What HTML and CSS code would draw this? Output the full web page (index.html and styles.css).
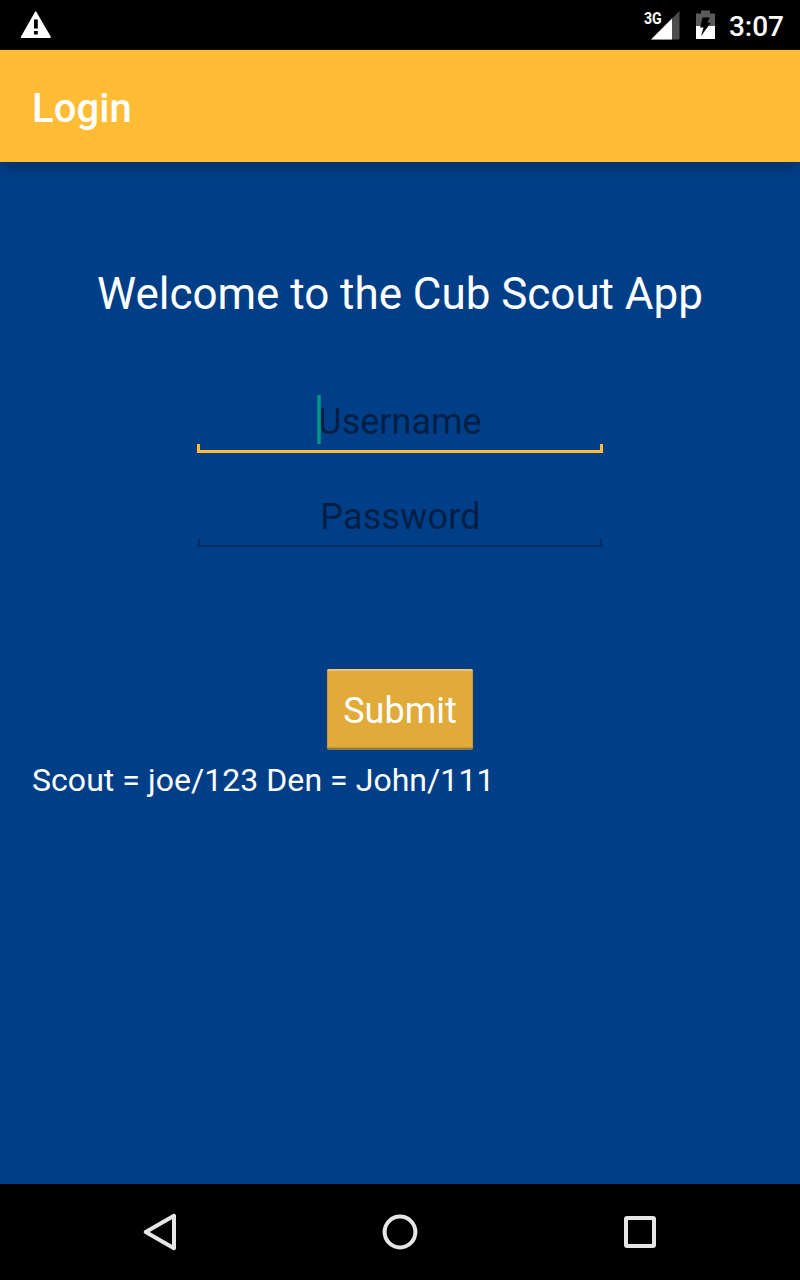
FILE: index.html
```
<!DOCTYPE html>
<html lang="en">
<head>
<meta charset="utf-8">
<title>Login</title>
<link rel="stylesheet" href="styles.css">
</head>
<body>
<div class="screen">
  <div class="status">
    <svg class="warning" width="32" height="28" viewBox="20 10 32 28"><path d="M35.700 12 50.200 37.200H21.500Z" fill="#fff" stroke="#fff" stroke-width="1.400" stroke-linejoin="round"/><path d="M34 19.500h3.800v9H34zM34 31h3.800v3.600H34z" fill="#000"/></svg>
    <div class="status-right">
      <span class="network">3G</span>
      <svg class="signal" width="29" height="29" viewBox="0 0 29 29"><path d="M28.500 0V28.500H0Z" fill="#4d4d4d"/><path d="M21 7.500V28.500H0Z" fill="#fff"/></svg>
      <svg class="battery" width="19" height="29" viewBox="0 0 19 29"><path d="M5 .5h9v3h5V16H0V3.500h5z" fill="#5b5b5b"/><path d="M0 16h19v13H0z" fill="#fff"/><path d="M6.500 7.500H13.800L11.400 12.800H14.800L5 26 7.500 17.500H4.200Z" fill="#000"/></svg>
      <span class="clock">3:07</span>
    </div>
  </div>
  <header class="toolbar"><h1>Login</h1></header>
  <main class="content">
    <h2 class="welcome">Welcome to the Cub Scout App</h2>
    <div class="field focused"><span class="hint"><i class="caret"></i>Username</span></div>
    <div class="field"><span class="hint password">Password</span></div>
    <button class="submit">Submit</button>
    <p class="note">Scout = joe/123 Den = John/111</p>
  </main>
  <nav class="nav">
    <svg width="48" height="48" viewBox="0 0 48 48"><path d="M38 7.800V40.200L9.700 24Z"/></svg>
    <svg width="48" height="48" viewBox="0 0 48 48"><circle cx="24" cy="24" r="15.400"/></svg>
    <svg width="48" height="48" viewBox="0 0 48 48"><rect x="10" y="10" width="28" height="28" rx="1"/></svg>
  </nav>
</div>
</body>
</html>
```
FILE: styles.css
```
* { box-sizing: border-box; }
body { margin: 0; background: #003f87; font-family: Roboto, sans-serif; color: #fff; }
svg { display: block; flex: none; }
.screen { display: flex; flex-direction: column; width: 800px; height: 1280px; overflow: hidden; }
.status { display: flex; justify-content: space-between; height: 50px; padding: 10px 16px 0 20px; background: #000; }
.status-right { display: flex; align-items: flex-start; }
.network { font-size: 17px; line-height: 16px; font-weight: 700; margin-right: -11px; width: 18px; white-space: nowrap; transform: scaleX(.83); transform-origin: left; position: relative; }
.signal { margin-top: 1px; }
.battery { margin: 0 14px 0 16px; }
.clock { font-size: 28px; line-height: 32px; font-weight: 500; margin-top: 1px; }
.toolbar { position: relative; height: 112px; padding: 35px 32px 0; background: #ffbc34; box-shadow: 0 9px 14px -4px rgba(0, 0, 0, .3); }
.toolbar h1 { margin: 0; font-size: 40px; line-height: 48px; font-weight: 500; letter-spacing: .1px; }
.content { flex: 1; display: flex; flex-direction: column; align-items: center; padding: 106px 32px 0; background: #003f87; }
.welcome { margin: 0 0 72px; font-size: 44px; line-height: 52px; font-weight: 400; letter-spacing: -.03px; white-space: nowrap; }
.field { width: 404px; height: 60px; margin-bottom: 122px; padding-top: 9px; text-align: center; color: #001f46;
  background: linear-gradient(#002d62, #002d62) left bottom / 2px 8px no-repeat, linear-gradient(#002d62, #002d62) right bottom / 2px 8px no-repeat, linear-gradient(#002d62, #002d62) left bottom / 100% 2px no-repeat; }
.field.focused { width: 406px; height: 61px; margin-bottom: 34px;
  background: linear-gradient(#ffbc34, #ffbc34) left bottom / 3px 9px no-repeat, linear-gradient(#ffbc34, #ffbc34) right bottom / 3px 9px no-repeat, linear-gradient(#ffbc34, #ffbc34) left bottom / 100% 3px no-repeat; }
.hint { position: relative; display: inline-block; font-size: 36px; line-height: 42px; }
.password { letter-spacing: .2px; margin-left: 1px; }
.caret { position: absolute; left: -1px; top: -6px; width: 4px; height: 49px; background: linear-gradient(90deg, #00818a 25%, #009688 25%, #009688 75%, #00818a 75%); }
.submit { width: 146px; height: 81px; padding: 3px 0 0; border: 0; border-top: 2px solid #ebc57b; border-bottom: 2px solid #8b7a43; border-radius: 2px; background: #e0ab3a; box-shadow: inset 1px 0 #cc9c38, inset -1px 0 #cc9c38, inset 0 -1px #c79837; color: #fff; font: 36px/42px Roboto, sans-serif; }
.note { align-self: flex-start; margin: 11px 0 0; font-size: 32px; line-height: 38px; letter-spacing: .05px; }
.nav { display: flex; justify-content: space-around; align-items: center; height: 96px; padding: 0 40px; background: #000; }
.nav svg { fill: none; stroke: #e6e6e6; stroke-width: 4; stroke-linejoin: round; }
```
